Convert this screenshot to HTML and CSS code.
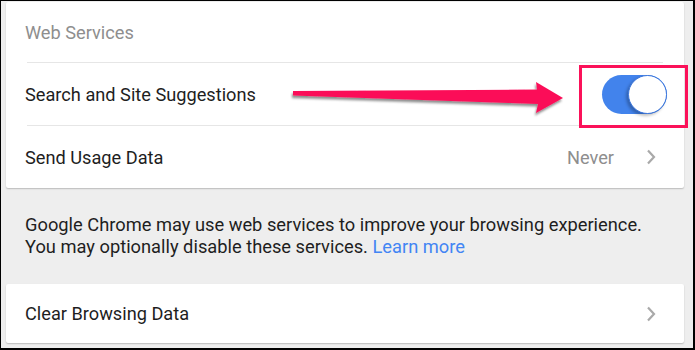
FILE: index.html
```html
<!DOCTYPE html>
<html>
<head>
<meta charset="utf-8">
<link rel="stylesheet" href="styles.css">
</head>
<body>
<div class="frame">
  <div class="card">
    <div class="row header">Web Services</div>
    <div class="divider"></div>
    <div class="row">
      <span class="label">Search and Site Suggestions</span>
      <span class="toggle"><span class="knob"></span></span>
    </div>
    <div class="divider"></div>
    <div class="row">
      <span class="label">Send Usage Data</span>
      <span class="value">Never</span>
      <svg class="chev" width="10" height="16" viewBox="0 0 10 16"><path d="M2 1.5 L8 8 L2 14.5" fill="none" stroke="#a9a9a9" stroke-width="2.2"/></svg>
    </div>
  </div>
  <p class="note">Google Chrome may use web services to improve your browsing experience.<br>You may optionally disable these services. <a class="link">Learn more</a></p>
  <div class="card card2">
    <div class="row">
      <span class="label">Clear Browsing Data</span>
      <svg class="chev" width="10" height="16" viewBox="0 0 10 16"><path d="M2 1.5 L8 8 L2 14.5" fill="none" stroke="#a9a9a9" stroke-width="2.2"/></svg>
    </div>
  </div>
  <svg class="arrow" width="695" height="350" viewBox="0 0 695 350">
    <defs>
      <filter id="sh" x="-10%" y="-50%" width="120%" height="200%">
        <feDropShadow dx="-1" dy="2.5" stdDeviation="1.2" flood-color="#000" flood-opacity="0.45"/>
      </filter>
    </defs>
    <polygon filter="url(#sh)" fill="#fb1159" points="293,91 537,89.5 536,82 563,98 536,113 538,104 293,95.5"/>
  </svg>
  <div class="highlight"></div>
</div>
</body>
</html>
```
FILE: styles.css
```css
html, body {
  margin: 0;
  padding: 0;
}
body {
  width: 695px;
  height: 350px;
  overflow: hidden;
  font-family: Roboto, "Liberation Sans", sans-serif;
}
.frame {
  position: relative;
  box-sizing: border-box;
  width: 695px;
  height: 350px;
  background: #eeeeee;
  border-style: solid;
  border-color: #000;
  border-width: 1px 2px 2px 1px;
  padding: 1px 9px 0 5px;
}
.card {
  background: #fff;
  border-radius: 2px;
  box-shadow: 0 1px 1.5px rgba(0,0,0,0.22);
}
.row {
  display: flex;
  align-items: center;
  height: 62px;
  padding: 0 17px 0 19px;
  font-size: 18.2px;
  color: #1e1e1e;
}
.row.header {
  height: 60px;
  color: #8e8e8e;
}
.label {
  flex: 1;
}
.divider {
  height: 1px;
  background: #e6e6e6;
  margin: 0 21px;
}
.value {
  color: #8e8e8e;
  margin-right: 32px;
}
.chev {
  display: block;
  margin-right: 11px;
}
.toggle {
  position: relative;
  display: block;
  width: 65px;
  height: 39px;
  border-radius: 20px;
  background: #4283ec;
}
.knob {
  position: absolute;
  right: 0;
  top: 0;
  box-sizing: border-box;
  width: 39px;
  height: 39px;
  border-radius: 50%;
  background: #fff;
  border: 1.5px solid #3b76dc;
  box-shadow: -2px 2px 3px rgba(0,0,0,0.25);
}
.note {
  margin: 0;
  padding: 26px 0 0 19px;
  height: 70px;
  font-size: 18.3px;
  line-height: 22px;
  color: #1e1e1e;
}
.link {
  color: #4285f4;
}
.card2 .row {
  height: 59px;
}
.arrow {
  position: absolute;
  left: -1px;
  top: -1px;
  pointer-events: none;
}
.highlight {
  position: absolute;
  left: 578px;
  top: 64px;
  width: 103px;
  height: 57px;
  border: 3px solid #fb1159;
}
```
